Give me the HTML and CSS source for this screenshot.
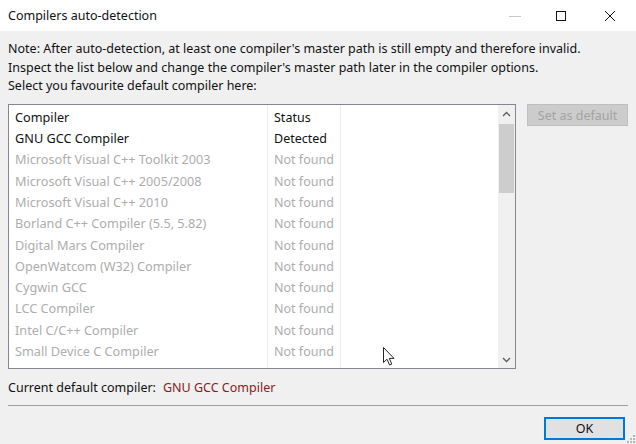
FILE: index.html
```html
<!DOCTYPE html>
<html>
<head>
<meta charset="utf-8">
<link rel="stylesheet" href="styles.css">
</head>
<body>
<div class="window">
  <div class="titlebar">
    <span class="title">Compilers auto-detection</span>
    <div class="controls">
      <span class="ctl ctl-min"><svg width="12" height="12" viewBox="0 0 12 12"><path d="M0 6.5H12" stroke="#c8c8c8" stroke-width="1"/></svg></span>
      <span class="ctl ctl-max"><svg width="12" height="12" viewBox="0 0 12 12"><rect x="1.5" y="1.5" width="9" height="9" fill="none" stroke="#111" stroke-width="1"/></svg></span>
      <span class="ctl ctl-close"><svg width="12" height="12" viewBox="0 0 12 12"><path d="M1 1L11 11M11 1L1 11" stroke="#111" stroke-width="1"/></svg></span>
    </div>
  </div>
  <div class="content">
    <p class="note">Note: After auto-detection, at least one compiler's master path is still empty and therefore invalid.<br>Inspect the list below and change the compiler's master path later in the compiler options.<br>Select you favourite default compiler here:</p>
    <div class="main">
      <div class="list">
        <div class="col col-name">
          <div class="cell">Compiler</div>
          <div class="cell">GNU GCC Compiler</div>
          <div class="cell off">Microsoft Visual C++ Toolkit 2003</div>
          <div class="cell off">Microsoft Visual C++ 2005/2008</div>
          <div class="cell off">Microsoft Visual C++ 2010</div>
          <div class="cell off">Borland C++ Compiler (5.5, 5.82)</div>
          <div class="cell off">Digital Mars Compiler</div>
          <div class="cell off">OpenWatcom (W32) Compiler</div>
          <div class="cell off">Cygwin GCC</div>
          <div class="cell off">LCC Compiler</div>
          <div class="cell off">Intel C/C++ Compiler</div>
          <div class="cell off">Small Device C Compiler</div>
        </div>
        <div class="col col-status">
          <div class="cell">Status</div>
          <div class="cell">Detected</div>
          <div class="cell off">Not found</div>
          <div class="cell off">Not found</div>
          <div class="cell off">Not found</div>
          <div class="cell off">Not found</div>
          <div class="cell off">Not found</div>
          <div class="cell off">Not found</div>
          <div class="cell off">Not found</div>
          <div class="cell off">Not found</div>
          <div class="cell off">Not found</div>
          <div class="cell off">Not found</div>
        </div>
        <div class="col col-fill"></div>
        <div class="scrollbar">
          <div class="sb-arrow"><svg width="9" height="6" viewBox="0 0 9 6"><path d="M1 5L4.5 1.5L8 5" fill="none" stroke="#606060" stroke-width="1.4"/></svg></div>
          <div class="sb-track"><div class="sb-thumb"></div></div>
          <div class="sb-arrow"><svg width="9" height="6" viewBox="0 0 9 6"><path d="M1 1L4.5 4.5L8 1" fill="none" stroke="#606060" stroke-width="1.4"/></svg></div>
        </div>
        <svg class="cursor" width="12" height="19" viewBox="0 0 12 19"><path d="M0.5 0.5V15.5L4 12.2L6.6 18L8.8 17L6.3 11.4H11L0.5 0.5Z" fill="#fff" stroke="#222" stroke-width="1" stroke-linejoin="round"/></svg>
      </div>
      <button class="btn btn-disabled">Set as default</button>
    </div>
    <div class="current"><span>Current default compiler:</span><span class="current-name">GNU GCC Compiler</span></div>
    <div class="separator"></div>
    <div class="footer">
      <button class="btn btn-ok">OK</button>
    </div>
    <svg class="grip" width="8" height="8" viewBox="0 0 8 8"><g fill="#b8b8b8"><rect x="6" y="0" width="2" height="2"/><rect x="3" y="3" width="2" height="2"/><rect x="6" y="3" width="2" height="2"/><rect x="0" y="6" width="2" height="2"/><rect x="3" y="6" width="2" height="2"/><rect x="6" y="6" width="2" height="2"/></g></svg>
  </div>
</div>
</body>
</html>
```

FILE: styles.css
```css
* { box-sizing: border-box; }
html, body { margin: 0; padding: 0; }
body {
  width: 636px;
  height: 444px;
  overflow: hidden;
  font-family: "Noto Sans", "Open Sans", sans-serif;
  font-size: 12.5px;
  color: #111;
  background: #f0f0f0;
}
.window {
  width: 636px;
  height: 444px;
  display: flex;
  flex-direction: column;
}
.titlebar {
  height: 31px;
  background: #fff;
  display: flex;
  align-items: center;
  justify-content: space-between;
  padding-left: 8px;
}
.title { font-size: 12.5px; color: #111; }
.controls { display: flex; height: 31px; }
.ctl {
  width: 46px;
  height: 31px;
  display: flex;
  align-items: center;
  justify-content: center;
}
.ctl-min { width: 46px; }
.ctl-close { width: 52px; }
.content {
  flex: 1;
  position: relative;
  padding: 9px 0 0 8px;
  display: flex;
  flex-direction: column;
}
.note {
  margin: 0;
  line-height: 18.7px;
  color: #111;
}
.main {
  display: flex;
  align-items: flex-start;
  gap: 11px;
  margin-top: 8px;
}
.list {
  position: relative;
  width: 508px;
  height: 265px;
  border: 1px solid #828790;
  background: #fff;
  display: flex;
}
.col { border-right: 1px solid #ececec; }
.col-name { width: 259px; font-size: 12.7px; }
.col-status { width: 73px; }
.col-fill { flex: 1; border-right: none; }
.cell {
  height: 21.3px;
  line-height: 21.3px;
  padding-left: 6px;
  white-space: nowrap;
  overflow: hidden;
  color: #111;
}
.cell:first-child { height: 23px; line-height: 23px; padding-top: 1px; }
.cell.off { color: #adadad; }
.scrollbar {
  width: 17px;
  background: #f0f0f0;
  display: flex;
  flex-direction: column;
}
.sb-arrow {
  height: 17px;
  display: flex;
  align-items: center;
  justify-content: center;
}
.sb-track { flex: 1; padding: 2px 1px 0 1px; }
.sb-thumb { height: 69px; background: #cdcdcd; }
.cursor { position: absolute; left: 374px; top: 242px; }
.btn {
  font-family: inherit;
  font-size: 12.5px;
  margin: 0;
}
.btn-disabled {
  width: 101px;
  height: 22px;
  background: #cccccc;
  border: 1px solid #bfbfbf;
  color: #a3a3a3;
  padding: 0;
}
.current {
  display: flex;
  gap: 7px;
  margin-top: 7px;
  height: 22px;
  align-items: center;
  color: #111;
}
.current-name { color: #8b1a1a; }
.separator {
  margin-top: 7px;
  width: 620px;
  height: 1px;
  background: #a0a0a0;
}
.footer {
  display: flex;
  justify-content: flex-end;
  width: 617px;
  margin-top: 11px;
}
.btn-ok {
  width: 81px;
  height: 23px;
  background: #e1e1e1;
  border: 2px solid #0078d7;
  color: #111;
  padding: 0;
}
.grip { position: absolute; right: 1px; bottom: 1px; }
```
